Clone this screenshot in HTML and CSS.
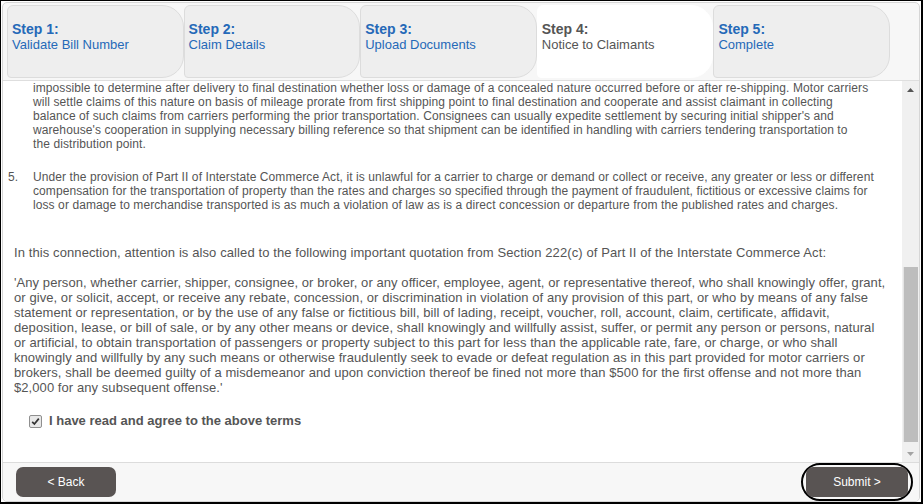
FILE: index.html
```html
<!DOCTYPE html>
<html>
<head>
<meta charset="utf-8">
<link rel="stylesheet" href="styles.css">
</head>
<body>
<div class="frame">
  <div class="wizard">
    <nav class="steps">
      <div class="step"><span class="step-num">Step 1:</span><span class="step-name">Validate Bill Number</span></div>
      <div class="step"><span class="step-num">Step 2:</span><span class="step-name">Claim Details</span></div>
      <div class="step"><span class="step-num">Step 3:</span><span class="step-name">Upload Documents</span></div>
      <div class="step active"><span class="step-num">Step 4:</span><span class="step-name">Notice to Claimants</span></div>
      <div class="step"><span class="step-num">Step 5:</span><span class="step-name">Complete</span></div>
    </nav>
    <div class="panel">
      <div class="doc">
        <div class="clause">
          <span class="clause-num"></span>
          <p class="clause-text">impossible to determine after delivery to final destination whether loss or damage of a concealed nature occurred before or after re-shipping. Motor carriers<br>will settle claims of this nature on basis of mileage prorate from first shipping point to final destination and cooperate and assist claimant in collecting<br>balance of such claims from carriers performing the prior transportation. Consignees can usually expedite settlement by securing initial shipper's and<br>warehouse's cooperation in supplying necessary billing reference so that shipment can be identified in handling with carriers tendering transportation to<br>the distribution point.</p>
        </div>
        <div class="clause">
          <span class="clause-num">5.</span>
          <p class="clause-text">Under the provision of Part II of Interstate Commerce Act, it is unlawful for a carrier to charge or demand or collect or receive, any greater or less or different<br>compensation for the transportation of property than the rates and charges so specified through the payment of fraudulent, fictitious or excessive claims for<br>loss or damage to merchandise transported is as much a violation of law as is a direct concession or departure from the published rates and charges.</p>
        </div>
        <p class="intro">In this connection, attention is also called to the following important quotation from Section 222(c) of Part II of the Interstate Commerce Act:</p>
        <p class="quote">'Any person, whether carrier, shipper, consignee, or broker, or any officer, employee, agent, or representative thereof, who shall knowingly offer, grant,<br>or give, or solicit, accept, or receive any rebate, concession, or discrimination in violation of any provision of this part, or who by means of any false<br>statement or representation, or by the use of any false or fictitious bill, bill of lading, receipt, voucher, roll, account, claim, certificate, affidavit,<br>deposition, lease, or bill of sale, or by any other means or device, shall knowingly and willfully assist, suffer, or permit any person or persons, natural<br>or artificial, to obtain transportation of passengers or property subject to this part for less than the applicable rate, fare, or charge, or who shall<br>knowingly and willfully by any such means or otherwise fraudulently seek to evade or defeat regulation as in this part provided for motor carriers or<br>brokers, shall be deemed guilty of a misdemeanor and upon conviction thereof be fined not more than $500 for the first offense and not more than<br>$2,000 for any subsequent offense.'</p>
        <label class="agree">
          <span class="check"><svg width="9" height="9" viewBox="0 0 9 9"><path d="M1.2 4.8 L3.4 7 L7.8 1.6" fill="none" stroke="#333" stroke-width="1.7"/></svg></span>
          I have read and agree to the above terms
        </label>
      </div>
      <div class="scrollbar">
        <div class="sb-btn"><svg width="7" height="4" viewBox="0 0 7 4"><path d="M0 4 L3.5 0 L7 4 Z" fill="#555"/></svg></div>
        <div class="sb-track"><div class="sb-thumb" style="margin-top:169px;height:175px"></div></div>
        <div class="sb-btn"><svg width="7" height="4" viewBox="0 0 7 4"><path d="M0 0 L3.5 4 L7 0 Z" fill="#a3a3a3"/></svg></div>
      </div>
    </div>
    <footer class="actions">
      <button class="btn back">&lt; Back</button>
      <span class="focus-ring"><button class="btn submit">Submit &gt;</button></span>
    </footer>
  </div>
</div>
</body>
</html>
```
FILE: styles.css
```css
html, body {
  margin: 0;
  padding: 0;
  background: #fff;
}
body {
  font-family: "Liberation Sans", Arial, sans-serif;
}
.frame {
  width: 923px;
  height: 504px;
  box-sizing: border-box;
  border-style: solid;
  border-color: #000;
  border-width: 1px 2px 2px 1px;
  background: #fff;
  display: flex;
}
.wizard {
  flex: 1;
  margin: 1px 1px 0 1px;
  border: 1px solid #d6d6d6;
  border-radius: 5px;
  background: #f7f7f7;
  display: flex;
  flex-direction: column;
  overflow: hidden;
}
.steps {
  display: flex;
  padding: 2px 0 2px 4px;
  border-bottom: 1px solid #dedede;
}
.step {
  width: 176.6px;
  height: 73px;
  box-sizing: border-box;
  border: 1px solid #dcdcdc;
  border-radius: 6px 22px 22px 4px;
  background: #eeeeee;
  padding: 15px 0 0 4px;
  display: flex;
  flex-direction: column;
  line-height: 16px;
  color: #2569b8;
}
.step-num {
  font-weight: bold;
  font-size: 14px;
}
.step-name {
  font-size: 13px;
}
.step.active {
  background: #fff;
  border-color: #fff;
  color: #555;
}
.panel {
  flex: 1;
  min-height: 0;
  display: flex;
  background: #fff;
}
.doc {
  flex: 1;
  overflow: hidden;
  color: #555;
}
.clause {
  display: flex;
  padding-left: 5px;
  font-size: 12px;
  line-height: 14px;
}
.clause + .clause {
  margin-top: 19px;
}
.clause-num {
  width: 25px;
  flex: none;
}
.clause-text {
  margin: 0;
  white-space: nowrap;
  letter-spacing: 0.09px;
}
.intro {
  margin: 33px 0 0 11px;
  font-size: 13px;
  line-height: 15px;
  white-space: nowrap;
  letter-spacing: 0.1px;
}
.quote {
  margin: 15px 0 0 11px;
  font-size: 13px;
  line-height: 15px;
  white-space: nowrap;
  letter-spacing: 0.07px;
}
.agree {
  margin: 18px 0 0 26px;
  display: flex;
  align-items: center;
  gap: 7px;
  font-size: 13px;
  font-weight: bold;
  line-height: 16px;
}
.check {
  width: 11px;
  height: 11px;
  border: 1px solid #8f8f8f;
  border-radius: 2px;
  background: #e8e8e8;
  display: flex;
  align-items: center;
  justify-content: center;
}
.scrollbar {
  width: 17px;
  flex: none;
  background: #f0f0f0;
  display: flex;
  flex-direction: column;
}
.sb-btn {
  height: 17px;
  display: flex;
  align-items: center;
  justify-content: center;
}
.sb-track {
  flex: 1;
}
.sb-thumb {
  margin-left: 1px;
  margin-right: 1px;
  box-sizing: border-box;
  background: #bdbdbd;
  border-left: 1px solid #e4e4e4;
}
.actions {
  height: 38px;
  flex: none;
  border-top: 1px solid #dcdcdc;
  background: #f7f7f7;
  display: flex;
  justify-content: space-between;
  align-items: flex-start;
  padding: 0 6px 0 13px;
}
.btn {
  height: 30px;
  border: 0;
  border-radius: 7px;
  background: #595453;
  color: #fff;
  font-family: "Liberation Sans", Arial, sans-serif;
  font-size: 12px;
  padding: 0;
}
.back {
  width: 100px;
  margin-top: 4px;
}
.submit {
  width: 102px;
}
.focus-ring {
  display: flex;
  border: 2px solid #000;
  border-radius: 19px;
  padding: 2px 3px;
}
```
